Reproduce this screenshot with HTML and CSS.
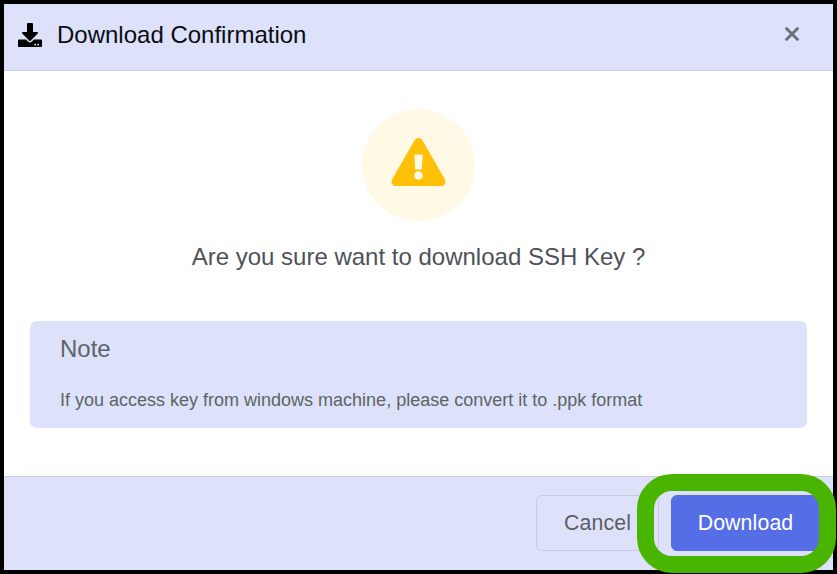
FILE: index.html
```html
<!DOCTYPE html>
<html lang="en">
<head>
<meta charset="utf-8">
<title>Download Confirmation</title>
<link rel="stylesheet" href="styles.css">
</head>
<body>
<div class="modal">
  <header class="modal-header">
    <svg class="title-icon" viewBox="0 0 512 512" aria-hidden="true">
      <path d="M216 0h80c13.300 0 24 10.700 24 24v168h87.700c17.800 0 26.700 21.500 14.100 34.100L269.700 378.300c-7.500 7.500-19.800 7.500-27.300 0L90.100 226.100c-12.600-12.600-3.700-34.100 14.100-34.100H192V24c0-13.300 10.700-24 24-24zm296 376v112c0 13.300-10.700 24-24 24H24c-13.300 0-24-10.700-24-24V376c0-13.300 10.700-24 24-24h146.700l49 49c20.100 20.100 52.500 20.100 72.600 0l49-49H488c13.300 0 24 10.700 24 24zm-124 88c0-11-9-20-20-20s-20 9-20 20 9 20 20 20 20-9 20-20zm64 0c0-11-9-20-20-20s-20 9-20 20 9 20 20 20 20-9 20-20z"/>
    </svg>
    <h1 class="modal-title">Download Confirmation</h1>
    <button class="close" aria-label="Close">
      <svg viewBox="0 0 16 16"><path d="M1.700 1.700l12.600 12.600M14.300 1.700L1.700 14.300"/></svg>
    </button>
  </header>
  <main class="modal-body">
    <div class="warning">
      <svg class="warning-icon" viewBox="0 0 576 512" aria-hidden="true">
        <path d="M569.517 440.013C587.975 472.007 564.806 512 527.940 512H48.054c-36.937 0-59.999-40.055-41.577-71.987L246.423 23.985c18.467-32.009 64.720-31.951 83.154 0l239.940 416.028zM288 354c-25.405 0-46 20.595-46 46s20.595 46 46 46 46-20.595 46-46-20.595-46-46-46zm-43.673-165.346l7.418 136c.347 6.364 5.609 11.346 11.982 11.346h48.546c6.373 0 11.635-4.982 11.982-11.346l7.418-136c.375-6.874-5.098-12.654-11.982-12.654h-63.383c-6.884 0-12.356 5.780-11.981 12.654z"/>
      </svg>
    </div>
    <p class="question">Are you sure want to download SSH Key ?</p>
    <section class="note">
      <h2 class="note-title">Note</h2>
      <p class="note-text">If you access key from windows machine, please convert it to .ppk format</p>
    </section>
  </main>
  <footer class="modal-footer">
    <button class="btn btn-cancel">Cancel</button>
    <button class="btn btn-download">Download</button>
    <span class="highlight"></span>
  </footer>
</div>
</body>
</html>
```
FILE: styles.css
```css
* { box-sizing: border-box; }
body {
  margin: 0;
  font-family: "Liberation Sans", Arial, sans-serif;
  overflow: hidden;
}
h1, h2, p { margin: 0; font-weight: 400; }
.modal {
  display: flex;
  flex-direction: column;
  width: 837px;
  height: 574px;
  border: 4px solid #000;
  background: #fff;
}
.modal-header {
  display: flex;
  align-items: center;
  height: 67px;
  padding: 0 32px 5px 14px;
  background: #dde1fa;
  border-bottom: 1px solid #cacde8;
}
.title-icon { width: 24px; height: 24px; margin-right: 15px; }
.modal-title { font-size: 24px; line-height: 28px; color: #0b0b12; }
.close {
  display: flex;
  width: 18px;
  height: 16px;
  margin-bottom: 1px;
  margin-left: auto;
  padding: 0 1px;
  border: 0;
  background: none;
}
.close svg { width: 16px; height: 16px; fill: none; stroke: #6c6f7b; stroke-width: 2.9; }
.modal-body {
  display: flex;
  flex: 1;
  flex-direction: column;
  align-items: center;
  padding: 38px 26px 0;
}
.warning {
  width: 113px;
  height: 112px;
  padding: 29px;
  border-radius: 50%;
  background: #fff9e6;
}
.warning-icon { display: block; width: 55px; height: 48px; fill: #ffc107; }
.question {
  margin-top: 22px;
  font-size: 24px;
  line-height: 28px;
  color: #4f5257;
}
.note {
  width: 100%;
  height: 107px;
  margin-top: 50px;
  padding: 14px 30px;
  border-radius: 7px;
  background: #dde1fa;
  color: #5c6466;
}
.note-title { font-size: 24px; line-height: 28px; }
.note-text { margin-top: 27px; font-size: 18px; line-height: 21px; }
.modal-footer {
  position: relative;
  display: flex;
  gap: 12px;
  justify-content: flex-end;
  height: 94px;
  padding: 18px 13px 0 0;
  background: #dde1fa;
  border-top: 1px solid #cacde8;
}
.btn {
  height: 56px;
  padding: 0;
  border: 1px solid #c8cce3;
  border-radius: 6px;
  font: 21.3px/54px "Liberation Sans", Arial, sans-serif;
  letter-spacing: .12px;
}
.btn-cancel { width: 123px; background: transparent; color: #5b5e66; }
.btn-download { width: 149px; border-color: #556ee6; background: #556ee6; color: #fff; }
.highlight {
  position: absolute;
  top: -3px;
  right: -3px;
  width: 199px;
  height: 99px;
  border: 17px solid #4ab500;
  border-radius: 35px;
}
```
